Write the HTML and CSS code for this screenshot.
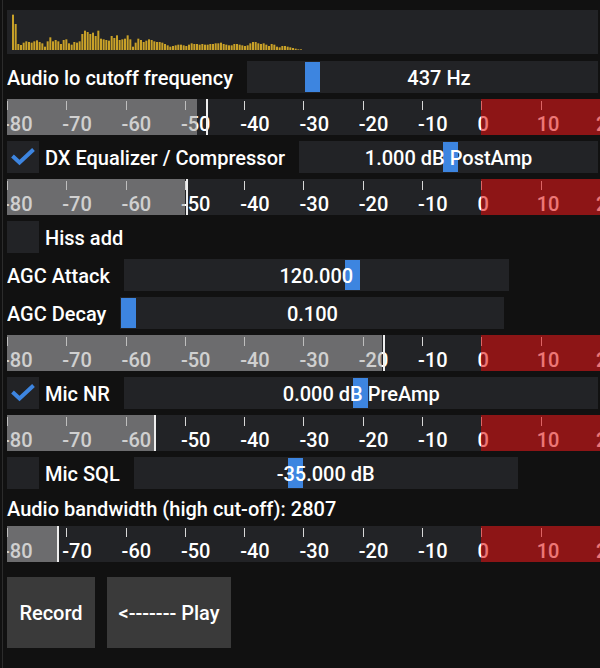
FILE: index.html
```html
<!DOCTYPE html>
<html>
<head>
<meta charset="utf-8">
<link rel="stylesheet" href="styles.css">
</head>
<body>
<div class="app">
  <div class="spectrum">
    <svg class="bars" width="291" height="40" viewBox="37 30 873 120" preserveAspectRatio="none">
      <g fill="#c9a128">
        <rect x="37" y="44" width="6" height="106"/><rect x="45" y="72" width="6" height="78"/><rect x="53" y="132" width="6" height="18"/><rect x="61" y="135" width="6" height="15"/><rect x="69" y="128" width="6" height="22"/><rect x="77" y="124" width="6" height="26"/><rect x="85" y="126" width="6" height="24"/><rect x="93" y="128" width="6" height="22"/><rect x="101" y="124" width="6" height="26"/><rect x="109" y="121" width="6" height="29"/>
        <rect x="117" y="126" width="6" height="24"/><rect x="125" y="130" width="6" height="20"/><rect x="133" y="140" width="6" height="10"/><rect x="141" y="124" width="6" height="26"/><rect x="149" y="112" width="6" height="38"/><rect x="157" y="124" width="6" height="26"/><rect x="165" y="120" width="6" height="30"/><rect x="173" y="124" width="6" height="26"/><rect x="181" y="132" width="6" height="18"/><rect x="189" y="120" width="6" height="30"/>
        <rect x="197" y="118" width="6" height="32"/><rect x="205" y="130" width="6" height="20"/><rect x="213" y="134" width="6" height="16"/><rect x="221" y="126" width="6" height="24"/><rect x="229" y="128" width="6" height="22"/><rect x="237" y="124" width="6" height="26"/><rect x="245" y="102" width="6" height="48"/><rect x="253" y="92" width="6" height="58"/><rect x="261" y="96" width="6" height="54"/><rect x="269" y="102" width="6" height="48"/>
        <rect x="277" y="98" width="6" height="52"/><rect x="285" y="108" width="6" height="42"/><rect x="293" y="92" width="6" height="58"/><rect x="301" y="116" width="6" height="34"/><rect x="309" y="118" width="6" height="32"/><rect x="317" y="120" width="6" height="30"/><rect x="325" y="122" width="6" height="28"/><rect x="333" y="108" width="6" height="42"/><rect x="341" y="114" width="6" height="36"/><rect x="349" y="106" width="6" height="44"/>
        <rect x="357" y="120" width="6" height="30"/><rect x="365" y="118" width="6" height="32"/><rect x="373" y="116" width="6" height="34"/><rect x="381" y="106" width="6" height="44"/><rect x="389" y="118" width="6" height="32"/><rect x="397" y="140" width="6" height="10"/><rect x="405" y="128" width="6" height="22"/><rect x="413" y="116" width="6" height="34"/><rect x="421" y="120" width="6" height="30"/><rect x="429" y="126" width="6" height="24"/>
        <rect x="437" y="122" width="6" height="28"/><rect x="445" y="118" width="6" height="32"/><rect x="453" y="120" width="6" height="30"/><rect x="461" y="124" width="6" height="26"/><rect x="469" y="126" width="6" height="24"/><rect x="477" y="126" width="6" height="24"/><rect x="485" y="128" width="6" height="22"/><rect x="493" y="132" width="6" height="18"/><rect x="501" y="136" width="6" height="14"/><rect x="509" y="140" width="6" height="10"/>
        <rect x="517" y="138" width="6" height="12"/><rect x="525" y="136" width="6" height="14"/><rect x="533" y="134" width="6" height="16"/><rect x="541" y="134" width="6" height="16"/><rect x="549" y="136" width="6" height="14"/><rect x="557" y="138" width="6" height="12"/><rect x="565" y="134" width="6" height="16"/><rect x="573" y="130" width="6" height="20"/><rect x="581" y="132" width="6" height="18"/><rect x="589" y="132" width="6" height="18"/>
        <rect x="597" y="134" width="6" height="16"/><rect x="605" y="132" width="6" height="18"/><rect x="613" y="134" width="6" height="16"/><rect x="621" y="134" width="6" height="16"/><rect x="629" y="132" width="6" height="18"/><rect x="637" y="132" width="6" height="18"/><rect x="645" y="130" width="6" height="20"/><rect x="653" y="130" width="6" height="20"/><rect x="661" y="128" width="6" height="22"/><rect x="669" y="132" width="6" height="18"/>
        <rect x="677" y="134" width="6" height="16"/><rect x="685" y="136" width="6" height="14"/><rect x="693" y="136" width="6" height="14"/><rect x="701" y="132" width="6" height="18"/><rect x="709" y="132" width="6" height="18"/><rect x="717" y="134" width="6" height="16"/><rect x="725" y="136" width="6" height="14"/><rect x="733" y="138" width="6" height="12"/><rect x="741" y="136" width="6" height="14"/><rect x="749" y="130" width="6" height="20"/>
        <rect x="757" y="126" width="6" height="24"/><rect x="765" y="126" width="6" height="24"/><rect x="773" y="130" width="6" height="20"/><rect x="781" y="132" width="6" height="18"/><rect x="789" y="130" width="6" height="20"/><rect x="797" y="134" width="6" height="16"/><rect x="805" y="138" width="6" height="12"/><rect x="813" y="132" width="6" height="18"/><rect x="821" y="134" width="6" height="16"/><rect x="829" y="140" width="6" height="10"/>
        <rect x="837" y="142" width="6" height="8"/><rect x="845" y="138" width="6" height="12"/><rect x="853" y="138" width="6" height="12"/><rect x="861" y="140" width="6" height="10"/><rect x="869" y="142" width="6" height="8"/><rect x="877" y="144" width="6" height="6"/><rect x="885" y="146" width="6" height="4"/><rect x="893" y="148" width="6" height="2"/><rect x="901" y="148" width="6" height="2"/>
      </g>
    </svg>
  </div>

  <div class="row">
    <span class="label">Audio lo cutoff frequency</span>
    <div class="slider s-lo"><span class="grab" style="left:58px"></span><span class="value">437 Hz</span></div>
  </div>

  <div class="meter">
    <div class="scale">
      <div class="mark"><i></i><span>-80</span></div><div class="mark"><i></i><span>-70</span></div><div class="mark"><i></i><span>-60</span></div><div class="mark"><i></i><span>-50</span></div><div class="mark"><i></i><span>-40</span></div><div class="mark"><i></i><span>-30</span></div><div class="mark"><i></i><span>-20</span></div><div class="mark"><i></i><span>-10</span></div><div class="mark"><i></i><span>0</span></div><div class="mark"><i></i><span>10</span></div><div class="mark"><i></i><span>20</span></div>
    </div>
    <div class="fill" style="width:190px"></div>
    <div class="peak" style="left:199px"></div>
    <div class="hot"></div>
  </div>

  <div class="row">
    <span class="check"><svg width="32" height="32" viewBox="0 0 32 32"><path d="M5.5 15 L12.5 21.5 L26.5 8.5" fill="none" stroke="#3d85e0" stroke-width="4"/></svg></span>
    <span class="label cb-label">DX Equalizer / Compressor</span>
    <div class="slider s-dx"><span class="grab" style="left:144px"></span><span class="value">1.000 dB PostAmp</span></div>
  </div>

  <div class="meter">
    <div class="scale">
      <div class="mark"><i></i><span>-80</span></div><div class="mark"><i></i><span>-70</span></div><div class="mark"><i></i><span>-60</span></div><div class="mark"><i></i><span>-50</span></div><div class="mark"><i></i><span>-40</span></div><div class="mark"><i></i><span>-30</span></div><div class="mark"><i></i><span>-20</span></div><div class="mark"><i></i><span>-10</span></div><div class="mark"><i></i><span>0</span></div><div class="mark"><i></i><span>10</span></div><div class="mark"><i></i><span>20</span></div>
    </div>
    <div class="fill" style="width:178px"></div>
    <div class="peak" style="left:179px"></div>
    <div class="hot"></div>
  </div>

  <div class="row">
    <span class="check"></span>
    <span class="label cb-label">Hiss add</span>
  </div>

  <div class="row">
    <span class="label">AGC Attack</span>
    <div class="slider s-att"><span class="grab" style="left:221px"></span><span class="value">120.000</span></div>
  </div>

  <div class="row">
    <span class="label">AGC Decay</span>
    <div class="slider s-dec"><span class="grab" style="left:1px"></span><span class="value">0.100</span></div>
  </div>

  <div class="meter">
    <div class="scale">
      <div class="mark"><i></i><span>-80</span></div><div class="mark"><i></i><span>-70</span></div><div class="mark"><i></i><span>-60</span></div><div class="mark"><i></i><span>-50</span></div><div class="mark"><i></i><span>-40</span></div><div class="mark"><i></i><span>-30</span></div><div class="mark"><i></i><span>-20</span></div><div class="mark"><i></i><span>-10</span></div><div class="mark"><i></i><span>0</span></div><div class="mark"><i></i><span>10</span></div><div class="mark"><i></i><span>20</span></div>
    </div>
    <div class="fill" style="width:375px"></div>
    <div class="peak" style="left:376px"></div>
    <div class="hot"></div>
  </div>

  <div class="row">
    <span class="check"><svg width="32" height="32" viewBox="0 0 32 32"><path d="M5.5 15 L12.5 21.5 L26.5 8.5" fill="none" stroke="#3d85e0" stroke-width="4"/></svg></span>
    <span class="label cb-label">Mic NR</span>
    <div class="slider s-nr"><span class="grab" style="left:229px"></span><span class="value">0.000 dB PreAmp</span></div>
  </div>

  <div class="meter">
    <div class="scale">
      <div class="mark"><i></i><span>-80</span></div><div class="mark"><i></i><span>-70</span></div><div class="mark"><i></i><span>-60</span></div><div class="mark"><i></i><span>-50</span></div><div class="mark"><i></i><span>-40</span></div><div class="mark"><i></i><span>-30</span></div><div class="mark"><i></i><span>-20</span></div><div class="mark"><i></i><span>-10</span></div><div class="mark"><i></i><span>0</span></div><div class="mark"><i></i><span>10</span></div><div class="mark"><i></i><span>20</span></div>
    </div>
    <div class="fill" style="width:147px"></div>
    <div class="peak" style="left:147px"></div>
    <div class="hot"></div>
  </div>

  <div class="row">
    <span class="check"></span>
    <span class="label cb-label">Mic SQL</span>
    <div class="slider s-sql"><span class="grab" style="left:154px"></span><span class="value">-35.000 dB</span></div>
  </div>

  <div class="text-row">Audio bandwidth (high cut-off): 2807</div>

  <div class="meter">
    <div class="scale">
      <div class="mark"><i></i><span>-80</span></div><div class="mark"><i></i><span>-70</span></div><div class="mark"><i></i><span>-60</span></div><div class="mark"><i></i><span>-50</span></div><div class="mark"><i></i><span>-40</span></div><div class="mark"><i></i><span>-30</span></div><div class="mark"><i></i><span>-20</span></div><div class="mark"><i></i><span>-10</span></div><div class="mark"><i></i><span>0</span></div><div class="mark"><i></i><span>10</span></div><div class="mark"><i></i><span>20</span></div>
    </div>
    <div class="fill" style="width:50px"></div>
    <div class="peak" style="left:50px"></div>
    <div class="hot"></div>
  </div>

  <div class="buttons">
    <button class="btn btn-rec">Record</button>
    <button class="btn btn-play">&lt;------- Play</button>
  </div>
</div>
</body>
</html>
```

FILE: styles.css
```css
* { box-sizing: border-box; }
html, body {
  margin: 0;
  padding: 0;
  background: #111111;
  width: 600px;
  height: 668px;
  overflow: hidden;
}
.app {
  margin-left: 2px;
  border-left: 1px solid #2c2c2c;
  padding: 10px 0 0 4px;
  height: 668px;
  width: 598px;
  overflow: hidden;
  display: flex;
  flex-direction: column;
  gap: 6px;
  font-family: Roboto, "Liberation Sans", sans-serif;
  font-size: 20px;
  font-weight: 500;
  color: #ffffff;
}
.spectrum {
  width: 591px;
  height: 44px;
  flex: none;
  background: #222326;
  padding-left: 5px;
  margin-bottom: 1px;
}
.bars { display: block; }
.row {
  width: 591px;
  height: 32px;
  flex: none;
  display: flex;
  align-items: center;
  gap: 14px;
  overflow: hidden;
  white-space: nowrap;
}
.label { line-height: 32px; flex: none; padding-top: 2px; }
.cb-label { margin-left: -8px; }
.check {
  width: 32px;
  height: 32px;
  flex: none;
  background: #222326;
}
.check svg { display: block; }
.slider {
  position: relative;
  height: 32px;
  flex: none;
  background: #222326;
  display: flex;
  align-items: center;
  justify-content: center;
}
.s-lo { width: 384px; }
.s-dx { width: 299px; }
.s-att { width: 385px; }
.s-dec { width: 384px; }
.s-nr { width: 475px; }
.s-sql { width: 384px; }
.grab {
  position: absolute;
  top: 1px;
  bottom: 1px;
  width: 15px;
  background: #3d85e0;
}
.value { position: relative; line-height: 32px; padding-top: 2px; }
.meter {
  position: relative;
  width: 593px;
  height: 36px;
  flex: none;
  background: #222326;
  overflow-x: clip;
  overflow-y: visible;
}
.scale {
  display: grid;
  grid-template-columns: repeat(11, 59.3px);
}
.mark i {
  display: block;
  width: 1px;
  height: 9px;
  margin-top: 2px;
  background: #d8d8d8;
}
.mark span {
  display: block;
  margin-left: -4px;
  margin-top: 3px;
  line-height: 23px;
  white-space: nowrap;
}
.fill {
  position: absolute;
  left: 0;
  top: 0;
  bottom: 0;
  background: rgba(170, 170, 170, 0.55);
}
.peak {
  position: absolute;
  top: 0;
  bottom: 0;
  width: 2px;
  background: #eeeeee;
}
.hot {
  position: absolute;
  left: 474.4px;
  right: 0;
  top: 0;
  bottom: 0;
  background: rgba(225, 10, 10, 0.56);
}
.text-row {
  height: 25px;
  flex: none;
  line-height: 25px;
  padding-top: 2px;
  white-space: nowrap;
}
.buttons {
  display: flex;
  gap: 12px;
  margin-top: 9px;
  flex: none;
}
.btn {
  height: 71px;
  border: none;
  background: #3a3a3a;
  color: #ffffff;
  font-family: Roboto, "Liberation Sans", sans-serif;
  font-size: 20px;
  font-weight: 500;
  padding: 0;
}
.btn-rec { width: 88px; }
.btn-play { width: 124px; }
```
